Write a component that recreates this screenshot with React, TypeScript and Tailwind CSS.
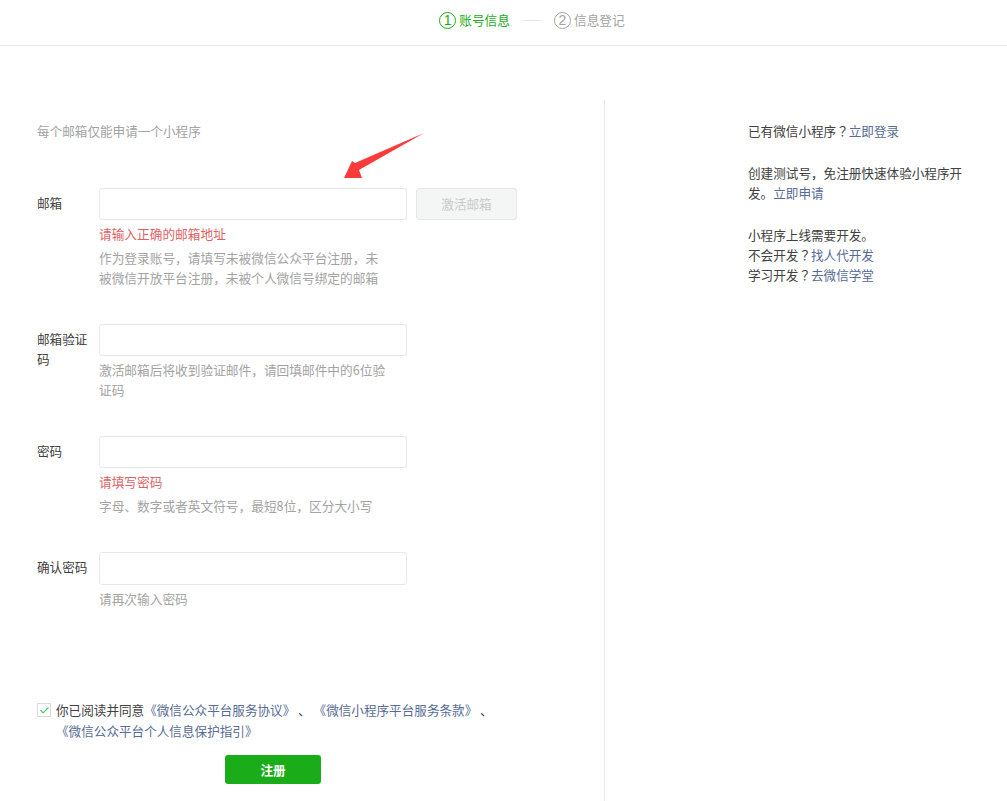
import { Check } from "lucide-react";

type Field = {
    label: string;
    inputHeight: string;
    error?: string;
    hints: string[];
    action?: string;
};

const FIELDS: Field[] = [
    {
        label: "邮箱",
        inputHeight: "h-[32px]",
        error: "请输入正确的邮箱地址",
        hints: ["作为登录账号，请填写未被微信公众平台注册，未", "被微信开放平台注册，未被个人微信号绑定的邮箱"],
        action: "激活邮箱",
    },
    {
        label: "邮箱验证码",
        inputHeight: "h-[32px]",
        hints: ["激活邮箱后将收到验证邮件，请回填邮件中的6位验", "证码"],
    },
    {
        label: "密码",
        inputHeight: "h-[32px]",
        error: "请填写密码",
        hints: ["字母、数字或者英文符号，最短8位，区分大小写"],
    },
    {
        label: "确认密码",
        inputHeight: "h-[33px]",
        hints: ["请再次输入密码"],
    },
];

function Step({ num, text, active }: { num: string; text: string; active?: boolean }) {
    return (
        <div className={`flex items-center gap-[3px] ${active ? "text-[#1aad19]" : "text-[#a3a3a3]"}`}>
            <span className="flex h-[17px] w-[17px] items-center justify-center rounded-full border border-current font-['Liberation_Sans',sans-serif] text-[14px] leading-none">
                {num}
            </span>
            <span className="text-[12.7px]">{text}</span>
        </div>
    );
}

function FormRow({ field }: { field: Field }) {
    return (
        <div className="mb-[36px] flex last:mb-0">
            <label className="mr-[10px] w-[52px] pt-[5px] text-[#404040]">{field.label}</label>
            <div className="w-[418px]">
                <div className="flex gap-[9px]">
                    <input className={`w-[308px] rounded-[3px] border border-[#e7e7eb] bg-white outline-none ${field.inputHeight}`} />
                    {field.action ? (
                        <button className="h-[32px] w-[101px] rounded-[3px] border border-[#e7e7eb] bg-[#f4f5f5] text-[12.6px] font-[inherit] text-[#c9c9c9]">
                            {field.action}
                        </button>
                    ) : null}
                </div>
                <div className="mt-[4px] text-[12.7px] text-[#a3a3a3]">
                    {field.error ? <div className="mb-[4px] text-[#e15f63]">{field.error}</div> : null}
                    {field.hints.map((hint) => (
                        <div key={hint}>{hint}</div>
                    ))}
                </div>
            </div>
        </div>
    );
}

// full-width question mark sits centred in the traditional cut
function Ask() {
    return <span className="font-['Noto_Sans_CJK_TC',sans-serif]">？</span>;
}

function Arrow() {
    return (
        <svg className="absolute left-[344px] top-[132px]" width="81" height="47" viewBox="0 0 81 47">
            <polygon points="0,46 8,29 11,31 80,1 15,38 18,46" fill="#fb3b3b" />
        </svg>
    );
}

export default function App() {
    return (
        <div className="relative h-[801px] w-[1007px] overflow-hidden bg-white font-['Noto_Sans_CJK_SC',sans-serif] text-[12.6px] leading-[20px]">
            <header className="flex h-[46px] items-center justify-center border-b border-[#e7e7eb] pb-[5px] pl-[57px]">
                <Step num="1" text="账号信息" active />
                <span className="mx-[13px] h-px w-[18px] bg-[#e7e7eb]" />
                <Step num="2" text="信息登记" />
            </header>

            <main className="mt-[54px] flex">
                <section className="h-[701px] w-[605px] border-r border-[#e7e7eb] pl-[37px] pt-[21px]">
                    <p className="mb-[47px] text-[#a3a3a3]">每个邮箱仅能申请一个小程序</p>
                    {FIELDS.map((field) => (
                        <FormRow key={field.label} field={field} />
                    ))}

                    <div className="mt-[90px] flex leading-[21px] text-[#404040]">
                        <span className="mr-[5px] mt-[4px] flex h-[14px] w-[14px] items-center justify-center border border-[#d9dadc]">
                            <Check size={11} strokeWidth={2.5} className="text-[#4bc46a]" />
                        </span>
                        <div>
                            你已阅读并同意
                            <a className="text-[#576b95]">《微信公众平台服务协议》</a> 、 <a className="text-[#576b95]">《微信小程序平台服务条款》</a> 、
                            <br />
                            <a className="text-[#576b95]">《微信公众平台个人信息保护指引》</a>
                        </div>
                    </div>

                    <button className="ml-[188px] mt-[14px] block h-[29px] w-[96px] rounded-[3px] bg-[#1aad19] text-[12.6px] font-bold text-white">
                        注册
                    </button>
                </section>

                <aside className="ml-[143px] w-[218px] pt-[21px] text-[#404040]">
                    <p className="mb-[22px]">
                        已有微信小程序<Ask /><a className="text-[#576b95]">立即登录</a>
                    </p>
                    <p className="mb-[22px]">
                        创建测试号，免注册快速体验小程序开发。<a className="text-[#576b95]">立即申请</a>
                    </p>
                    <p>小程序上线需要开发。</p>
                    <p>
                        不会开发<Ask /><a className="text-[#576b95]">找人代开发</a>
                    </p>
                    <p>
                        学习开发<Ask /><a className="text-[#576b95]">去微信学堂</a>
                    </p>
                </aside>
            </main>

            <Arrow />
        </div>
    );
}
